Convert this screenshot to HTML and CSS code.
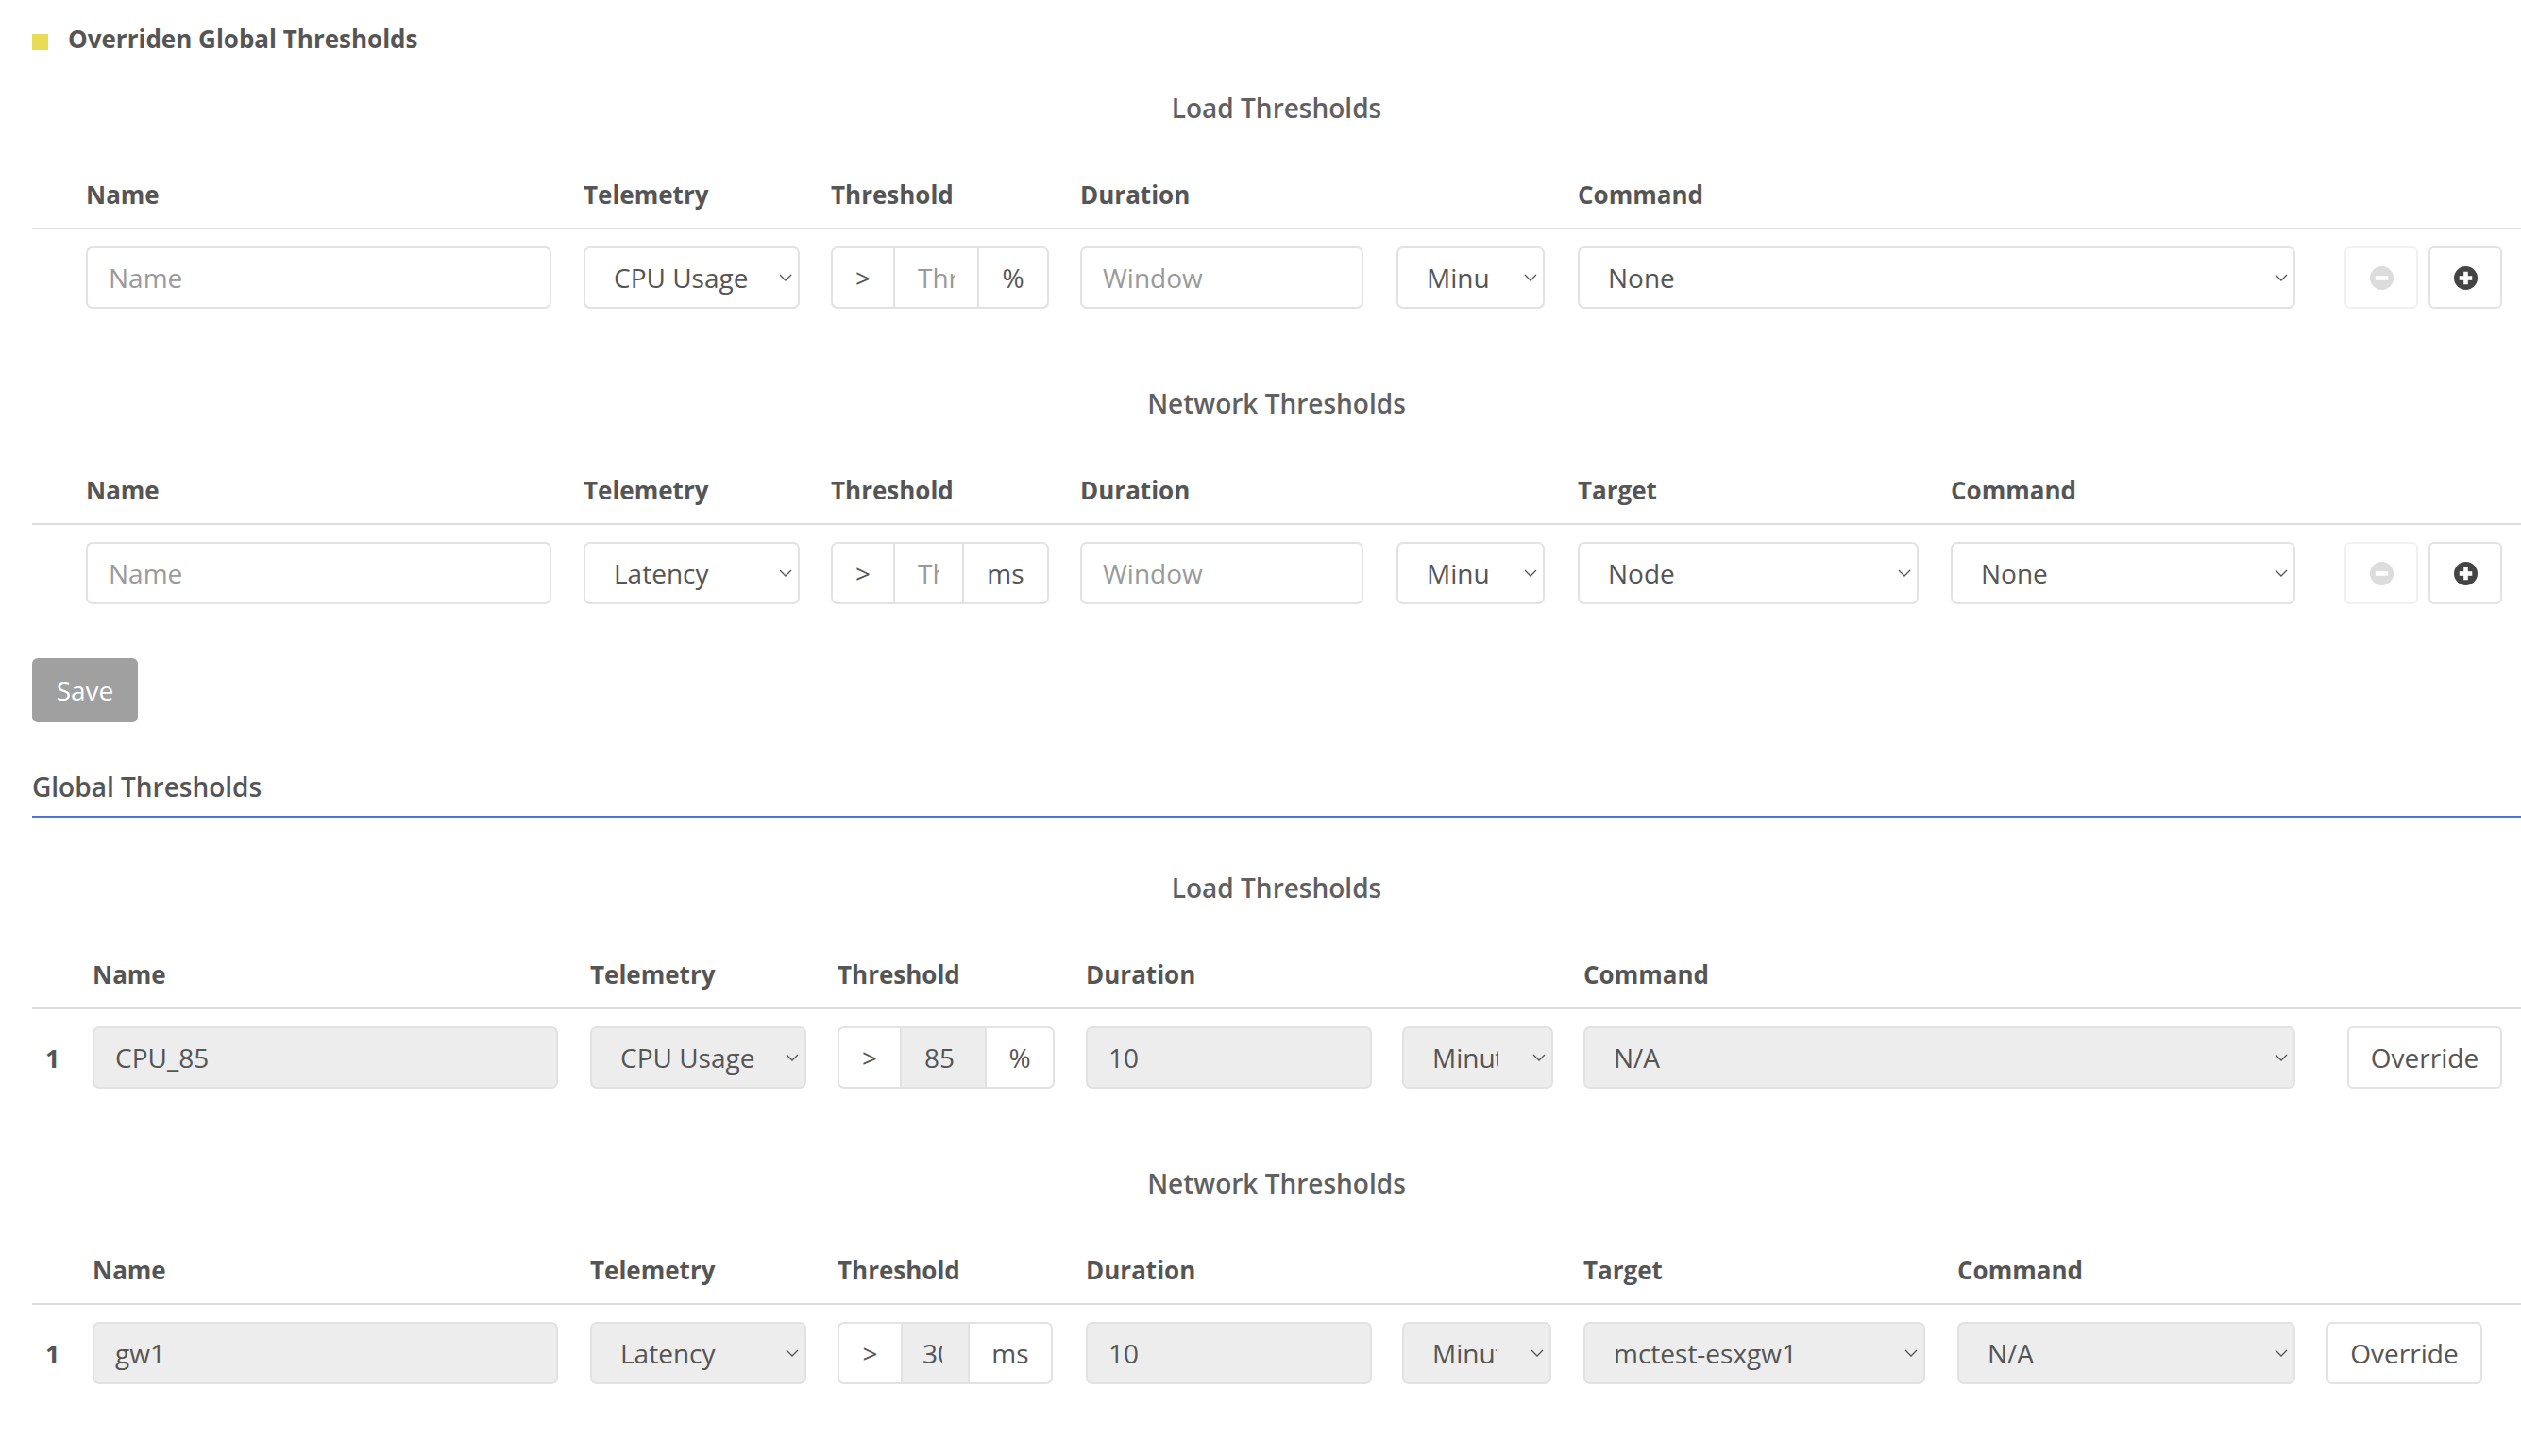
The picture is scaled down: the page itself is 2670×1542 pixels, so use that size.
FILE: index.html
```html
<!DOCTYPE html>
<html lang="en">
<head>
<meta charset="utf-8">
<title>Thresholds</title>
<link rel="stylesheet" href="styles.css">
</head>
<body>
<div class="page">

  <div class="overridden-title"><span class="legend-swatch"></span>Overriden Global Thresholds</div>

  <section class="block">
    <div class="block-title">Load Thresholds</div>
    <div class="grid grid-head cols-a">
      <div></div><div>Name</div><div>Telemetry</div><div>Threshold</div><div>Duration</div><div></div><div>Command</div><div></div>
    </div>
    <div class="grid grid-row cols-a">
      <div></div>
      <input class="input w-name" placeholder="Name">
      <div class="select w-tele"><span class="select-value">CPU Usage</span><svg class="chevron" viewBox="0 0 14 8"><path d="M1 1l6 6 6-6"/></svg></div>
      <div class="tgroup w-thresh"><span class="addon addon-gt">&gt;</span><input class="tinput tin-a" placeholder="Threshold"><span class="addon addon-unit">%</span></div>
      <input class="input w-dur" placeholder="Window">
      <div class="select w-unit"><span class="select-value">Minutes</span><svg class="chevron" viewBox="0 0 14 8"><path d="M1 1l6 6 6-6"/></svg></div>
      <div class="select w-cmd-a"><span class="select-value">None</span><svg class="chevron" viewBox="0 0 14 8"><path d="M1 1l6 6 6-6"/></svg></div>
      <div class="actions">
        <button class="icon-btn is-disabled" type="button"><svg class="circle-icon" viewBox="0 0 24 24"><circle cx="12" cy="12" r="12" fill="#dcdcdc"/><rect x="5.5" y="9.8" width="13" height="4.4" fill="#fff"/></svg></button>
        <button class="icon-btn" type="button"><svg class="circle-icon" viewBox="0 0 24 24"><circle cx="12" cy="12" r="12" fill="#444"/><rect x="5.5" y="9.8" width="13" height="4.4" fill="#fff"/><rect x="9.8" y="5.5" width="4.4" height="13" fill="#fff"/></svg></button>
      </div>
    </div>
  </section>

  <section class="block">
    <div class="block-title">Network Thresholds</div>
    <div class="grid grid-head cols-b">
      <div></div><div>Name</div><div>Telemetry</div><div>Threshold</div><div>Duration</div><div></div><div>Target</div><div>Command</div><div></div>
    </div>
    <div class="grid grid-row cols-b">
      <div></div>
      <input class="input w-name" placeholder="Name">
      <div class="select w-tele"><span class="select-value">Latency</span><svg class="chevron" viewBox="0 0 14 8"><path d="M1 1l6 6 6-6"/></svg></div>
      <div class="tgroup w-thresh"><span class="addon addon-gt">&gt;</span><input class="tinput tin-b" placeholder="Threshold"><span class="addon addon-unit">ms</span></div>
      <input class="input w-dur" placeholder="Window">
      <div class="select w-unit"><span class="select-value">Minutes</span><svg class="chevron" viewBox="0 0 14 8"><path d="M1 1l6 6 6-6"/></svg></div>
      <div class="select w-target-b"><span class="select-value">Node</span><svg class="chevron" viewBox="0 0 14 8"><path d="M1 1l6 6 6-6"/></svg></div>
      <div class="select w-cmd-b"><span class="select-value">None</span><svg class="chevron" viewBox="0 0 14 8"><path d="M1 1l6 6 6-6"/></svg></div>
      <div class="actions">
        <button class="icon-btn is-disabled" type="button"><svg class="circle-icon" viewBox="0 0 24 24"><circle cx="12" cy="12" r="12" fill="#dcdcdc"/><rect x="5.5" y="9.8" width="13" height="4.4" fill="#fff"/></svg></button>
        <button class="icon-btn" type="button"><svg class="circle-icon" viewBox="0 0 24 24"><circle cx="12" cy="12" r="12" fill="#444"/><rect x="5.5" y="9.8" width="13" height="4.4" fill="#fff"/><rect x="9.8" y="5.5" width="4.4" height="13" fill="#fff"/></svg></button>
      </div>
    </div>
  </section>

  <button class="save-btn" type="button">Save</button>

  <div class="tab-title">Global Thresholds</div>

  <div class="tab-content global">
    <section class="block">
      <div class="block-title">Load Thresholds</div>
      <div class="grid grid-head cols-c">
        <div></div><div>Name</div><div>Telemetry</div><div>Threshold</div><div>Duration</div><div></div><div>Command</div><div></div>
      </div>
      <div class="grid grid-row cols-c">
        <div class="idx">1</div>
        <input class="input w-name is-disabled" value="CPU_85" readonly>
        <div class="select w-tele is-disabled"><span class="select-value">CPU Usage</span><svg class="chevron" viewBox="0 0 14 8"><path d="M1 1l6 6 6-6"/></svg></div>
        <div class="tgroup w-thresh-c"><span class="addon addon-gt">&gt;</span><input class="tinput tin-c is-disabled" value="85" readonly><span class="addon addon-unit">%</span></div>
        <input class="input w-dur is-disabled" value="10" readonly>
        <div class="select w-unit is-disabled"><span class="select-value">Minutes</span><svg class="chevron" viewBox="0 0 14 8"><path d="M1 1l6 6 6-6"/></svg></div>
        <div class="select w-cmd-c is-disabled"><span class="select-value">N/A</span><svg class="chevron" viewBox="0 0 14 8"><path d="M1 1l6 6 6-6"/></svg></div>
        <div class="actions"><button class="btn-outline" type="button">Override</button></div>
      </div>
    </section>

    <section class="block">
      <div class="block-title">Network Thresholds</div>
      <div class="grid grid-head cols-d">
        <div></div><div>Name</div><div>Telemetry</div><div>Threshold</div><div>Duration</div><div></div><div>Target</div><div>Command</div><div></div>
      </div>
      <div class="grid grid-row cols-d">
        <div class="idx">1</div>
        <input class="input w-name is-disabled" value="gw1" readonly>
        <div class="select w-tele is-disabled"><span class="select-value">Latency</span><svg class="chevron" viewBox="0 0 14 8"><path d="M1 1l6 6 6-6"/></svg></div>
        <div class="tgroup w-thresh-d"><span class="addon addon-gt addon-gt-d">&gt;</span><input class="tinput tin-d is-disabled" value="30" readonly><span class="addon addon-unit">ms</span></div>
        <input class="input w-dur is-disabled" value="10" readonly>
        <div class="select w-unit-d is-disabled"><span class="select-value">Minutes</span><svg class="chevron" viewBox="0 0 14 8"><path d="M1 1l6 6 6-6"/></svg></div>
        <div class="select w-target-d is-disabled"><span class="select-value">mctest-esxgw1</span><svg class="chevron" viewBox="0 0 14 8"><path d="M1 1l6 6 6-6"/></svg></div>
        <div class="select w-cmd-d is-disabled"><span class="select-value">N/A</span><svg class="chevron" viewBox="0 0 14 8"><path d="M1 1l6 6 6-6"/></svg></div>
        <div class="actions"><button class="btn-outline btn-outline-d" type="button">Override</button></div>
      </div>
    </section>
  </div>

</div>
</body>
</html>
```

FILE: styles.css
```css
* { box-sizing: border-box; }

html, body {
  margin: 0;
  padding: 0;
  background: #fff;
}

body {
  font-family: "Open Sans", "Noto Sans", sans-serif;
  font-size: 28px;
  color: #555;
  width: 2670px;
  overflow: hidden;
}

.page {
  padding-left: 34px;
}

/* ---------- headings ---------- */
.overridden-title {
  display: flex;
  align-items: center;
  margin-top: 23px;
  line-height: 37px;
  font-size: 26px;
  font-weight: 700;
}

.legend-swatch {
  width: 17px;
  height: 17px;
  background: #e8dc55;
  margin-right: 21px;
  margin-top: 6px;
  flex: none;
}

.block-title {
  text-align: center;
  font-weight: 600;
  line-height: 37px;
  margin-top: 36px;
  margin-bottom: 55px;
  color: #606060;
}

.tab-title {
  margin-top: 50px;
  line-height: 37px;
  font-weight: 600;
  padding-bottom: 12px;
  border-bottom: 2px solid #4a74cf;
}

.tab-content {
  padding-top: 20px;
}

/* ---------- grids ---------- */
.grid {
  display: grid;
}

.cols-a { grid-template-columns: 57px 527px 262px 264px 335px 192px 812px 1fr; }
.cols-b { grid-template-columns: 57px 527px 262px 264px 335px 192px 395px 417px 1fr; }
.cols-c { grid-template-columns: 64px 527px 262px 263px 335px 192px 809px 1fr; }
.cols-d { grid-template-columns: 64px 527px 262px 263px 335px 192px 396px 391px 1fr; }

.grid-head {
  line-height: 37px;
  font-size: 26px;
  font-weight: 700;
  padding-bottom: 16px;
  border-bottom: 2px solid #dedede;
}

.grid-row {
  align-items: center;
  padding-top: 18px;
  padding-bottom: 46px;
}

.idx {
  font-weight: 700;
  font-size: 27px;
  padding-left: 14px;
}

/* ---------- controls ---------- */
.input {
  display: block;
  height: 66px;
  border: 2px solid #e2e2e2;
  border-radius: 7px;
  padding: 0 20px 0 22px;
  font-family: inherit;
  font-size: 28px;
  color: #555;
  background: #fff;
  outline: none;
}

.input::placeholder,
.tinput::placeholder {
  color: #9a9a9a;
  opacity: 1;
}

.is-disabled {
  background: #ededed;
}

.select {
  display: flex;
  align-items: center;
  height: 66px;
  border: 2px solid #e2e2e2;
  border-radius: 7px;
  padding-left: 30px;
  background: #fff;
}

.select.is-disabled {
  background: #ededed;
}

.select-value {
  flex: 1;
  min-width: 0;
  overflow: hidden;
  white-space: nowrap;
}

.chevron {
  flex: none;
  width: 14px;
  height: 8px;
  margin-left: 36px;
  margin-right: 6px;
  fill: none;
  stroke: #555;
  stroke-width: 1.3;
}

.w-tele .chevron {
  margin-left: 28px;
}

.w-name { width: 493px; }
.w-tele { width: 229px; }
.w-thresh { width: 231px; }
.w-thresh-c { width: 230px; }
.w-thresh-d { width: 228px; }
.w-dur { width: 300px; }
.global .w-dur { width: 303px; }
.w-unit { width: 157px; }
.global .w-unit { width: 160px; }
.w-unit-d { width: 158px; }
.w-cmd-a { width: 760px; }
.w-target-b { width: 361px; }
.w-cmd-b { width: 365px; }
.w-cmd-c { width: 754px; }
.w-target-d { width: 362px; }
.w-cmd-d { width: 358px; }

/* threshold input group */
.tgroup {
  display: flex;
  height: 66px;
  border: 2px solid #e2e2e2;
  border-radius: 7px;
  overflow: hidden;
  background: #fff;
}

.addon {
  display: flex;
  align-items: center;
  justify-content: center;
}

.addon-gt { width: 64px; flex: none; }
.addon-gt-d { width: 65px; }
.addon-unit { flex: 1; }

.tinput {
  flex: none;
  height: 100%;
  border: 0;
  border-left: 2px solid #e2e2e2;
  border-right: 2px solid #e2e2e2;
  padding: 0 24px 0 24px;
  font-family: inherit;
  font-size: 28px;
  color: #555;
  background: #fff;
  outline: none;
}

.tinput.is-disabled { background: #ededed; }

.tin-a { width: 91px; }
.tin-b { width: 75px; }
.tin-c { width: 92px; }
.tin-d { width: 73px; padding-left: 21px; padding-right: 27px; }

/* buttons */
.actions {
  display: flex;
  gap: 11px;
}

.icon-btn {
  width: 78px;
  height: 66px;
  display: flex;
  align-items: center;
  justify-content: center;
  background: #fff;
  border: 2px solid #e3e3e3;
  border-radius: 6px;
  padding: 0;
}

.icon-btn.is-disabled {
  border-color: #f1f1f1;
}

.circle-icon {
  width: 25px;
  height: 25px;
}

.btn-outline {
  height: 66px;
  width: 164px;
  padding: 0;
  background: #fff;
  border: 2px solid #e3e3e3;
  border-radius: 6px;
  font-family: inherit;
  font-size: 28px;
  color: #555;
}

.btn-outline-d { width: 165px; }

.save-btn {
  display: block;
  margin-top: 11px;
  width: 112px;
  height: 68px;
  padding: 0;
  border: 0;
  border-radius: 6px;
  background: #a0a0a0;
  color: #fff;
  font-family: inherit;
  font-size: 28px;
}
```
